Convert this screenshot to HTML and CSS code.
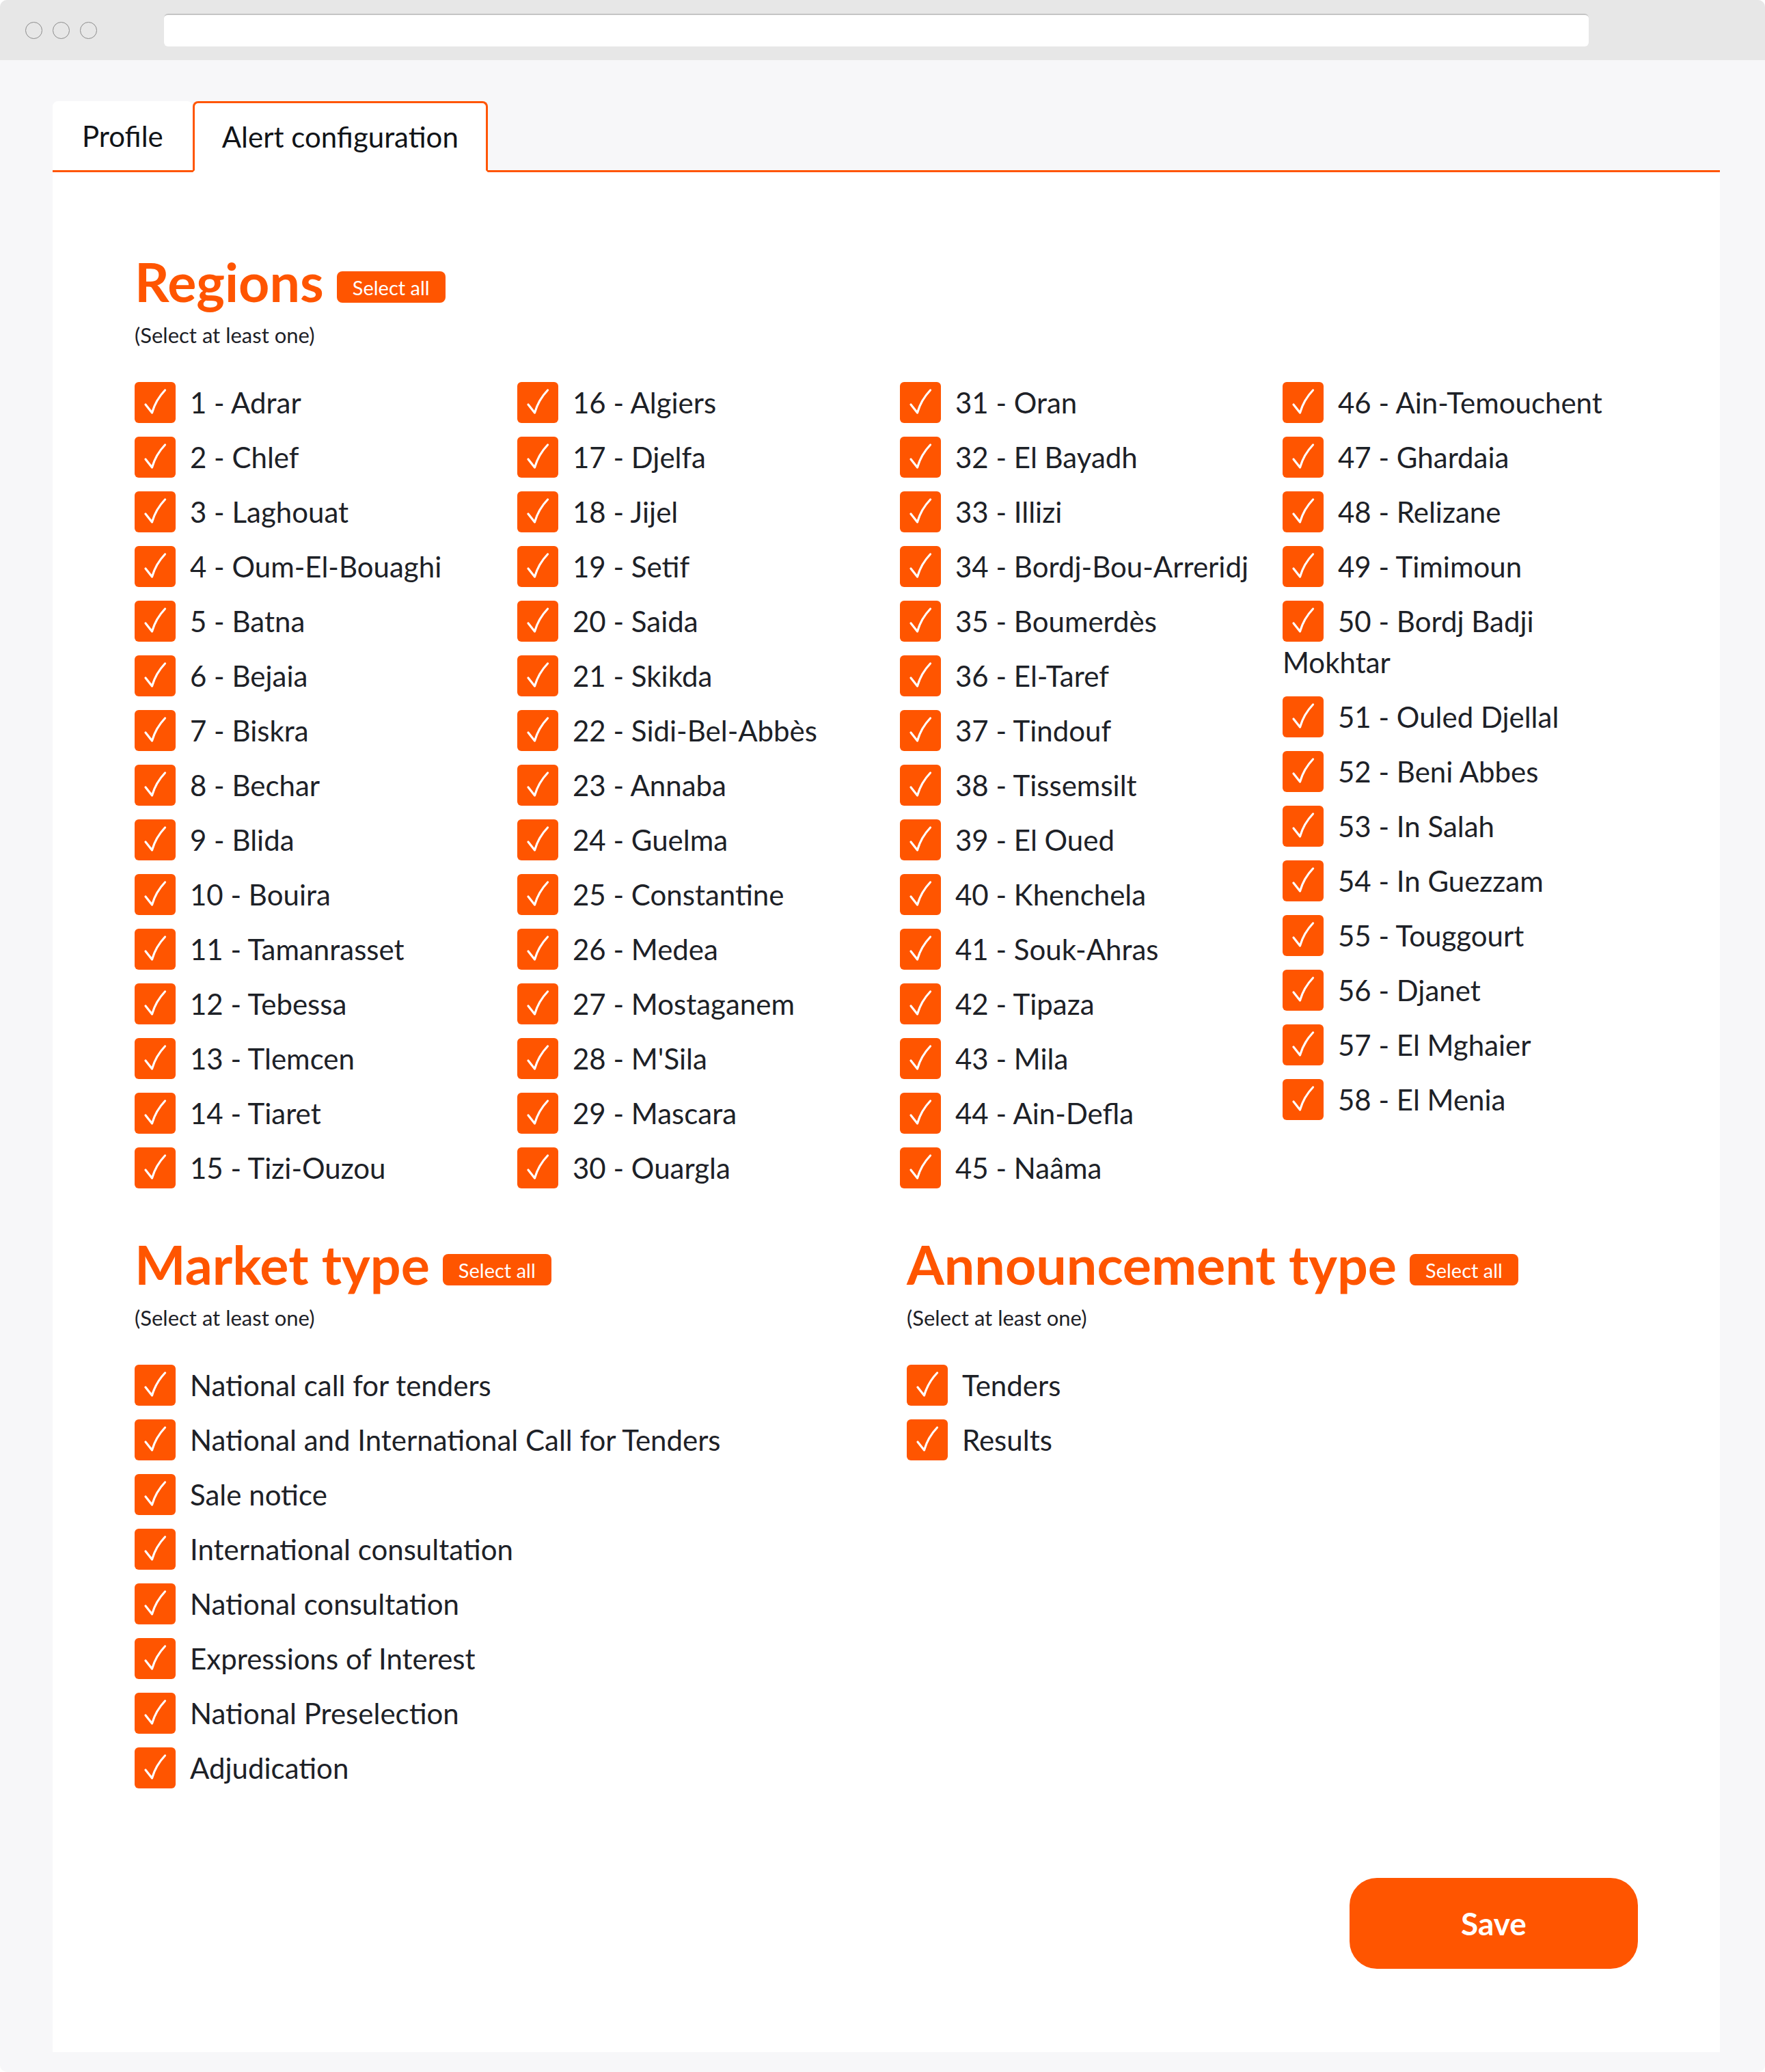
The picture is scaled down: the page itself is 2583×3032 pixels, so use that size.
FILE: index.html
```html
<!DOCTYPE html>
<html lang="en">
<head>
<meta charset="utf-8">
<title>Alert configuration</title>
<link rel="stylesheet" href="styles.css">
</head>
<body>
<div class="window">
  <div class="chrome">
    <span class="dot"></span><span class="dot"></span><span class="dot"></span>
    <div class="address"></div>
  </div>
  <div class="page">
    <div class="tabs">
      <div class="tab">Profile</div>
      <div class="tab active">Alert configuration</div>
      <div class="tab-fill"></div>
    </div>
    <div class="card">
      <section class="section">
        <div class="head"><h2 class="title">Regions</h2><span class="badge">Select all</span></div>
        <p class="hint">(Select at least one)</p>
        <div class="regions">
          <div class="col">
            <label class="check"><span class="box"><svg viewBox="0 0 60 60"><path d="M16 33 L25.5 45 Q31 26 44.5 12"/></svg></span>1 - Adrar</label>
            <label class="check"><span class="box"><svg viewBox="0 0 60 60"><path d="M16 33 L25.5 45 Q31 26 44.5 12"/></svg></span>2 - Chlef</label>
            <label class="check"><span class="box"><svg viewBox="0 0 60 60"><path d="M16 33 L25.5 45 Q31 26 44.5 12"/></svg></span>3 - Laghouat</label>
            <label class="check"><span class="box"><svg viewBox="0 0 60 60"><path d="M16 33 L25.5 45 Q31 26 44.5 12"/></svg></span>4 - Oum-El-Bouaghi</label>
            <label class="check"><span class="box"><svg viewBox="0 0 60 60"><path d="M16 33 L25.5 45 Q31 26 44.5 12"/></svg></span>5 - Batna</label>
            <label class="check"><span class="box"><svg viewBox="0 0 60 60"><path d="M16 33 L25.5 45 Q31 26 44.5 12"/></svg></span>6 - Bejaia</label>
            <label class="check"><span class="box"><svg viewBox="0 0 60 60"><path d="M16 33 L25.5 45 Q31 26 44.5 12"/></svg></span>7 - Biskra</label>
            <label class="check"><span class="box"><svg viewBox="0 0 60 60"><path d="M16 33 L25.5 45 Q31 26 44.5 12"/></svg></span>8 - Bechar</label>
            <label class="check"><span class="box"><svg viewBox="0 0 60 60"><path d="M16 33 L25.5 45 Q31 26 44.5 12"/></svg></span>9 - Blida</label>
            <label class="check"><span class="box"><svg viewBox="0 0 60 60"><path d="M16 33 L25.5 45 Q31 26 44.5 12"/></svg></span>10 - Bouira</label>
            <label class="check"><span class="box"><svg viewBox="0 0 60 60"><path d="M16 33 L25.5 45 Q31 26 44.5 12"/></svg></span>11 - Tamanrasset</label>
            <label class="check"><span class="box"><svg viewBox="0 0 60 60"><path d="M16 33 L25.5 45 Q31 26 44.5 12"/></svg></span>12 - Tebessa</label>
            <label class="check"><span class="box"><svg viewBox="0 0 60 60"><path d="M16 33 L25.5 45 Q31 26 44.5 12"/></svg></span>13 - Tlemcen</label>
            <label class="check"><span class="box"><svg viewBox="0 0 60 60"><path d="M16 33 L25.5 45 Q31 26 44.5 12"/></svg></span>14 - Tiaret</label>
            <label class="check"><span class="box"><svg viewBox="0 0 60 60"><path d="M16 33 L25.5 45 Q31 26 44.5 12"/></svg></span>15 - Tizi-Ouzou</label>
          </div>
          <div class="col">
            <label class="check"><span class="box"><svg viewBox="0 0 60 60"><path d="M16 33 L25.5 45 Q31 26 44.5 12"/></svg></span>16 - Algiers</label>
            <label class="check"><span class="box"><svg viewBox="0 0 60 60"><path d="M16 33 L25.5 45 Q31 26 44.5 12"/></svg></span>17 - Djelfa</label>
            <label class="check"><span class="box"><svg viewBox="0 0 60 60"><path d="M16 33 L25.5 45 Q31 26 44.5 12"/></svg></span>18 - Jijel</label>
            <label class="check"><span class="box"><svg viewBox="0 0 60 60"><path d="M16 33 L25.5 45 Q31 26 44.5 12"/></svg></span>19 - Setif</label>
            <label class="check"><span class="box"><svg viewBox="0 0 60 60"><path d="M16 33 L25.5 45 Q31 26 44.5 12"/></svg></span>20 - Saida</label>
            <label class="check"><span class="box"><svg viewBox="0 0 60 60"><path d="M16 33 L25.5 45 Q31 26 44.5 12"/></svg></span>21 - Skikda</label>
            <label class="check"><span class="box"><svg viewBox="0 0 60 60"><path d="M16 33 L25.5 45 Q31 26 44.5 12"/></svg></span>22 - Sidi-Bel-Abbès</label>
            <label class="check"><span class="box"><svg viewBox="0 0 60 60"><path d="M16 33 L25.5 45 Q31 26 44.5 12"/></svg></span>23 - Annaba</label>
            <label class="check"><span class="box"><svg viewBox="0 0 60 60"><path d="M16 33 L25.5 45 Q31 26 44.5 12"/></svg></span>24 - Guelma</label>
            <label class="check"><span class="box"><svg viewBox="0 0 60 60"><path d="M16 33 L25.5 45 Q31 26 44.5 12"/></svg></span>25 - Constantine</label>
            <label class="check"><span class="box"><svg viewBox="0 0 60 60"><path d="M16 33 L25.5 45 Q31 26 44.5 12"/></svg></span>26 - Medea</label>
            <label class="check"><span class="box"><svg viewBox="0 0 60 60"><path d="M16 33 L25.5 45 Q31 26 44.5 12"/></svg></span>27 - Mostaganem</label>
            <label class="check"><span class="box"><svg viewBox="0 0 60 60"><path d="M16 33 L25.5 45 Q31 26 44.5 12"/></svg></span>28 - M'Sila</label>
            <label class="check"><span class="box"><svg viewBox="0 0 60 60"><path d="M16 33 L25.5 45 Q31 26 44.5 12"/></svg></span>29 - Mascara</label>
            <label class="check"><span class="box"><svg viewBox="0 0 60 60"><path d="M16 33 L25.5 45 Q31 26 44.5 12"/></svg></span>30 - Ouargla</label>
          </div>
          <div class="col">
            <label class="check"><span class="box"><svg viewBox="0 0 60 60"><path d="M16 33 L25.5 45 Q31 26 44.5 12"/></svg></span>31 - Oran</label>
            <label class="check"><span class="box"><svg viewBox="0 0 60 60"><path d="M16 33 L25.5 45 Q31 26 44.5 12"/></svg></span>32 - El Bayadh</label>
            <label class="check"><span class="box"><svg viewBox="0 0 60 60"><path d="M16 33 L25.5 45 Q31 26 44.5 12"/></svg></span>33 - Illizi</label>
            <label class="check"><span class="box"><svg viewBox="0 0 60 60"><path d="M16 33 L25.5 45 Q31 26 44.5 12"/></svg></span>34 - Bordj-Bou-Arreridj</label>
            <label class="check"><span class="box"><svg viewBox="0 0 60 60"><path d="M16 33 L25.5 45 Q31 26 44.5 12"/></svg></span>35 - Boumerdès</label>
            <label class="check"><span class="box"><svg viewBox="0 0 60 60"><path d="M16 33 L25.5 45 Q31 26 44.5 12"/></svg></span>36 - El-Taref</label>
            <label class="check"><span class="box"><svg viewBox="0 0 60 60"><path d="M16 33 L25.5 45 Q31 26 44.5 12"/></svg></span>37 - Tindouf</label>
            <label class="check"><span class="box"><svg viewBox="0 0 60 60"><path d="M16 33 L25.5 45 Q31 26 44.5 12"/></svg></span>38 - Tissemsilt</label>
            <label class="check"><span class="box"><svg viewBox="0 0 60 60"><path d="M16 33 L25.5 45 Q31 26 44.5 12"/></svg></span>39 - El Oued</label>
            <label class="check"><span class="box"><svg viewBox="0 0 60 60"><path d="M16 33 L25.5 45 Q31 26 44.5 12"/></svg></span>40 - Khenchela</label>
            <label class="check"><span class="box"><svg viewBox="0 0 60 60"><path d="M16 33 L25.5 45 Q31 26 44.5 12"/></svg></span>41 - Souk-Ahras</label>
            <label class="check"><span class="box"><svg viewBox="0 0 60 60"><path d="M16 33 L25.5 45 Q31 26 44.5 12"/></svg></span>42 - Tipaza</label>
            <label class="check"><span class="box"><svg viewBox="0 0 60 60"><path d="M16 33 L25.5 45 Q31 26 44.5 12"/></svg></span>43 - Mila</label>
            <label class="check"><span class="box"><svg viewBox="0 0 60 60"><path d="M16 33 L25.5 45 Q31 26 44.5 12"/></svg></span>44 - Ain-Defla</label>
            <label class="check"><span class="box"><svg viewBox="0 0 60 60"><path d="M16 33 L25.5 45 Q31 26 44.5 12"/></svg></span>45 - Naâma</label>
          </div>
          <div class="col">
            <label class="check"><span class="box"><svg viewBox="0 0 60 60"><path d="M16 33 L25.5 45 Q31 26 44.5 12"/></svg></span>46 - Ain-Temouchent</label>
            <label class="check"><span class="box"><svg viewBox="0 0 60 60"><path d="M16 33 L25.5 45 Q31 26 44.5 12"/></svg></span>47 - Ghardaia</label>
            <label class="check"><span class="box"><svg viewBox="0 0 60 60"><path d="M16 33 L25.5 45 Q31 26 44.5 12"/></svg></span>48 - Relizane</label>
            <label class="check"><span class="box"><svg viewBox="0 0 60 60"><path d="M16 33 L25.5 45 Q31 26 44.5 12"/></svg></span>49 - Timimoun</label>
            <label class="check"><span class="box"><svg viewBox="0 0 60 60"><path d="M16 33 L25.5 45 Q31 26 44.5 12"/></svg></span>50 - Bordj Badji Mokhtar</label>
            <label class="check"><span class="box"><svg viewBox="0 0 60 60"><path d="M16 33 L25.5 45 Q31 26 44.5 12"/></svg></span>51 - Ouled Djellal</label>
            <label class="check"><span class="box"><svg viewBox="0 0 60 60"><path d="M16 33 L25.5 45 Q31 26 44.5 12"/></svg></span>52 - Beni Abbes</label>
            <label class="check"><span class="box"><svg viewBox="0 0 60 60"><path d="M16 33 L25.5 45 Q31 26 44.5 12"/></svg></span>53 - In Salah</label>
            <label class="check"><span class="box"><svg viewBox="0 0 60 60"><path d="M16 33 L25.5 45 Q31 26 44.5 12"/></svg></span>54 - In Guezzam</label>
            <label class="check"><span class="box"><svg viewBox="0 0 60 60"><path d="M16 33 L25.5 45 Q31 26 44.5 12"/></svg></span>55 - Touggourt</label>
            <label class="check"><span class="box"><svg viewBox="0 0 60 60"><path d="M16 33 L25.5 45 Q31 26 44.5 12"/></svg></span>56 - Djanet</label>
            <label class="check"><span class="box"><svg viewBox="0 0 60 60"><path d="M16 33 L25.5 45 Q31 26 44.5 12"/></svg></span>57 - El Mghaier</label>
            <label class="check"><span class="box"><svg viewBox="0 0 60 60"><path d="M16 33 L25.5 45 Q31 26 44.5 12"/></svg></span>58 - El Menia</label>
          </div>
        </div>
      </section>
      <div class="types">
        <section class="section">
          <div class="head"><h2 class="title">Market type</h2><span class="badge">Select all</span></div>
          <p class="hint">(Select at least one)</p>
          <div class="list">
            <label class="check"><span class="box"><svg viewBox="0 0 60 60"><path d="M16 33 L25.5 45 Q31 26 44.5 12"/></svg></span>National call for tenders</label>
            <label class="check"><span class="box"><svg viewBox="0 0 60 60"><path d="M16 33 L25.5 45 Q31 26 44.5 12"/></svg></span>National and International Call for Tenders</label>
            <label class="check"><span class="box"><svg viewBox="0 0 60 60"><path d="M16 33 L25.5 45 Q31 26 44.5 12"/></svg></span>Sale notice</label>
            <label class="check"><span class="box"><svg viewBox="0 0 60 60"><path d="M16 33 L25.5 45 Q31 26 44.5 12"/></svg></span>International consultation</label>
            <label class="check"><span class="box"><svg viewBox="0 0 60 60"><path d="M16 33 L25.5 45 Q31 26 44.5 12"/></svg></span>National consultation</label>
            <label class="check"><span class="box"><svg viewBox="0 0 60 60"><path d="M16 33 L25.5 45 Q31 26 44.5 12"/></svg></span>Expressions of Interest</label>
            <label class="check"><span class="box"><svg viewBox="0 0 60 60"><path d="M16 33 L25.5 45 Q31 26 44.5 12"/></svg></span>National Preselection</label>
            <label class="check"><span class="box"><svg viewBox="0 0 60 60"><path d="M16 33 L25.5 45 Q31 26 44.5 12"/></svg></span>Adjudication</label>
          </div>
        </section>
        <section class="section">
          <div class="head"><h2 class="title">Announcement type</h2><span class="badge">Select all</span></div>
          <p class="hint">(Select at least one)</p>
          <div class="list">
            <label class="check"><span class="box"><svg viewBox="0 0 60 60"><path d="M16 33 L25.5 45 Q31 26 44.5 12"/></svg></span>Tenders</label>
            <label class="check"><span class="box"><svg viewBox="0 0 60 60"><path d="M16 33 L25.5 45 Q31 26 44.5 12"/></svg></span>Results</label>
          </div>
        </section>
      </div>
      <div class="actions">
        <button class="save" type="button">Save</button>
      </div>
    </div>
  </div>
</div>
</body>
</html>
```

FILE: styles.css
```css
* { box-sizing: border-box; }
html { background: #ffffff; }
body {
  margin: 0;
  font-family: "Lato", "Liberation Sans", sans-serif;
  color: #1d2127;
}
.window {
  width: 2583px;
  height: 3032px;
  border-radius: 10px;
  overflow: hidden;
  background: #f7f7f9;
}
.chrome {
  height: 88px;
  background: #e7e7e7;
  display: flex;
  align-items: center;
  padding-left: 37px;
}
.dot {
  width: 25px;
  height: 25px;
  border-radius: 50%;
  border: 1.5px solid #8c8c8c;
  margin-right: 15px;
}
.address {
  margin-left: 83px;
  width: 2085px;
  height: 48px;
  background: #ffffff;
  border-top: 2px solid #c4c4c4;
  border-radius: 6px;
}
.page {
  padding: 60px 66px 0 77px;
}
.tabs {
  display: flex;
  height: 104px;
}
.tab {
  height: 104px;
  padding: 0 43px;
  display: flex;
  align-items: center;
  font-size: 42px;
  color: #111418;
  background: #ffffff;
  border-bottom: 3px solid #ff5500;
  border-radius: 8px 8px 0 0;
}
.tab.active {
  border: 3px solid #ff5500;
  border-bottom-color: #ffffff;
  padding: 0 40px;
}
.tab-fill {
  flex: 1;
  border-bottom: 3px solid #ff5500;
}
.card {
  background: #ffffff;
  height: 2751px;
  padding: 114px 120px 0 120px;
}
.head {
  display: flex;
  align-items: flex-start;
}
.title {
  margin: 0;
  font-size: 79px;
  line-height: 91px;
  font-weight: 700;
  color: #ff5500;
}
.badge {
  margin-top: 31px;
  margin-left: 19px;
  height: 46px;
  padding: 0 23px;
  display: inline-flex;
  align-items: center;
  background: #ff5500;
  color: #ffffff;
  font-size: 29px;
  border-radius: 8px;
}
.hint {
  margin: 16px 0 0 0;
  font-size: 31px;
  line-height: 34px;
  color: #1d2127;
}
.regions {
  margin-top: 52px;
  display: grid;
  grid-template-columns: repeat(4, 520px);
  column-gap: 40px;
}
.check {
  display: block;
  font-size: 42px;
  line-height: 60px;
  margin-bottom: 20px;
}
.box {
  display: inline-block;
  vertical-align: top;
  width: 60px;
  height: 60px;
  margin-right: 21px;
  border-radius: 6px;
  background: #ff5500;
}
.box svg {
  display: block;
  width: 60px;
  height: 60px;
  fill: none;
  stroke: #ffffff;
  stroke-width: 3.2;
  stroke-linecap: round;
  stroke-linejoin: round;
}
.types {
  margin-top: 45px;
  display: grid;
  grid-template-columns: 1070px 1fr;
  column-gap: 60px;
}
.list {
  margin-top: 52px;
}
.actions {
  margin-top: 111px;
  display: flex;
  justify-content: flex-end;
}
.save {
  width: 422px;
  height: 133px;
  border: none;
  border-radius: 40px;
  background: #ff5500;
  color: #ffffff;
  font-family: "Lato", "Liberation Sans", sans-serif;
  font-size: 46px;
  font-weight: 700;
}
```
